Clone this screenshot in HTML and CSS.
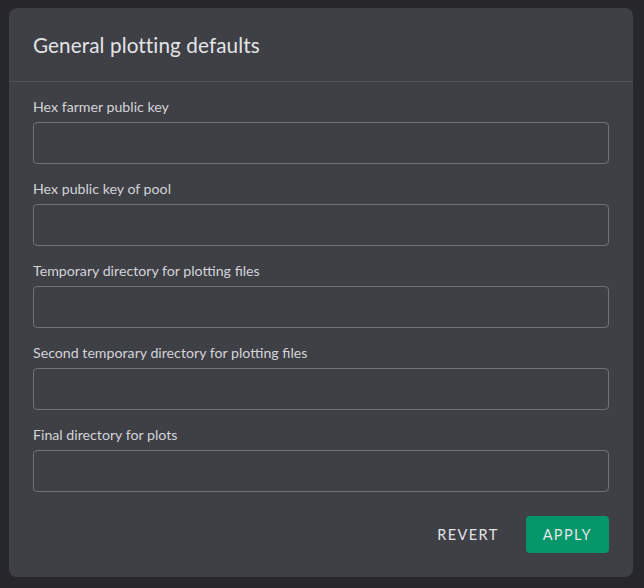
FILE: index.html
```html
<!DOCTYPE html>
<html>
<head>
<meta charset="utf-8">
<link rel="stylesheet" href="styles.css">
</head>
<body>
<div class="card">
  <div class="card-header">
    <h1 class="title">General plotting defaults</h1>
  </div>
  <div class="card-body">
    <div class="field">
      <label class="label">Hex farmer public key</label>
      <input class="input" type="text">
    </div>
    <div class="field">
      <label class="label">Hex public key of pool</label>
      <input class="input" type="text">
    </div>
    <div class="field">
      <label class="label">Temporary directory for plotting files</label>
      <input class="input" type="text">
    </div>
    <div class="field">
      <label class="label">Second temporary directory for plotting files</label>
      <input class="input" type="text">
    </div>
    <div class="field">
      <label class="label">Final directory for plots</label>
      <input class="input" type="text">
    </div>
    <div class="actions">
      <button class="btn btn-text">REVERT</button>
      <button class="btn btn-primary">APPLY</button>
    </div>
  </div>
</div>
</body>
</html>
```
FILE: styles.css
```css
html, body {
  margin: 0;
  padding: 0;
  background: #27272a;
}
body {
  padding: 8px 11px 11px 9px;
  font-family: "Lato", "Noto Sans", sans-serif;
  color: #e4e4e7;
}
.card {
  width: 624px;
  height: 569px;
  box-sizing: border-box;
  background: #3f3f46;
  border-radius: 8px;
  display: flex;
  flex-direction: column;
}
.card-header {
  height: 74px;
  box-sizing: border-box;
  border-bottom: 1px solid #52525b;
  display: flex;
  align-items: center;
  padding: 0 24px;
}
.title {
  margin: 0;
  font-size: 20.7px;
  font-weight: 400;
  color: #e4e4e7;
  letter-spacing: 0.1px;
}
.card-body {
  padding: 16px 24px 24px;
  display: flex;
  flex-direction: column;
  gap: 16px;
}
.field {
  display: flex;
  flex-direction: column;
  gap: 6px;
}
.label {
  font-size: 14.2px;
  line-height: 18px;
  color: #d4d4d8;
}
.input {
  height: 42px;
  box-sizing: border-box;
  background: transparent;
  border: 1px solid #71717a;
  border-radius: 4px;
  outline: none;
  color: #e4e4e7;
  font: inherit;
}
.actions {
  display: flex;
  justify-content: flex-end;
  align-items: center;
  gap: 10px;
  margin-top: 8px;
}
.btn {
  font-family: inherit;
  font-size: 14.5px;
  letter-spacing: 1.4px;
  border: none;
  border-radius: 4px;
  height: 37px;
  padding: 0 17px;
  cursor: pointer;
}
.btn-text {
  background: transparent;
  color: #e4e4e7;
}
.btn-primary {
  background: #059669;
  color: #e4e4e7;
}
```
